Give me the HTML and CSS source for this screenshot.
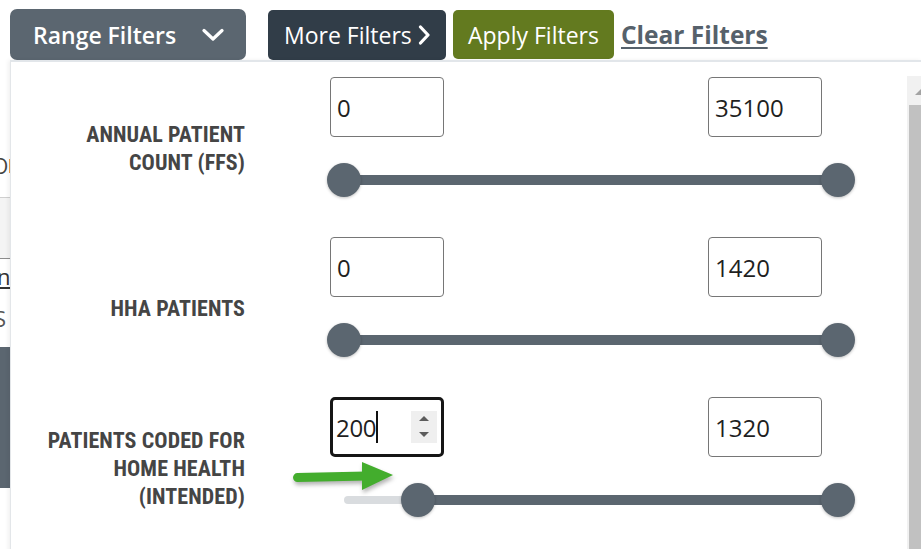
FILE: index.html
```html
<!DOCTYPE html>
<html lang="en">
<head>
<meta charset="utf-8">
<title>Range Filters</title>
<link rel="stylesheet" href="styles.css">
</head>
<body>
<div class="page">
  <div class="toolbar">
    <button class="btn btn-range">
      <span>Range Filters</span>
      <svg class="chev-down" width="22" height="14" viewBox="0 0 22 14"><polyline points="2,2.5 11,11 20,2.5" fill="none" stroke="#fff" stroke-width="3.2" stroke-linecap="round" stroke-linejoin="round"/></svg>
    </button>
    <button class="btn btn-more">
      <span>More Filters</span>
      <svg class="chev-right" width="13" height="20" viewBox="0 0 13 20"><polyline points="2.5,2 10,10 2.5,18" fill="none" stroke="#fff" stroke-width="3.2" stroke-linecap="round" stroke-linejoin="round"/></svg>
    </button>
    <button class="btn btn-apply">Apply Filters</button>
    <a class="clear" href="#">Clear Filters</a>
  </div>

  <div class="backdrop">
    <div class="frag frag-o"><span class="dark">O</span><span class="orange"></span></div>
    <div class="frag frag-band"></div>
    <div class="frag frag-n">n</div>
    <div class="frag frag-s">S</div>
    <div class="frag frag-block"></div>
  </div>

  <div class="dropdown">
    <div class="panel-body">
      <div class="filter-row">
        <div class="label">ANNUAL PATIENT<br>COUNT (FFS)</div>
        <div class="control">
          <div class="inputs">
            <div class="num">0</div>
            <div class="num">35100</div>
          </div>
          <div class="slider">
            <div class="track"></div>
            <span class="thumb thumb-start"></span>
            <span class="thumb thumb-end"></span>
          </div>
        </div>
      </div>

      <div class="filter-row">
        <div class="label">HHA PATIENTS</div>
        <div class="control">
          <div class="inputs">
            <div class="num">0</div>
            <div class="num">1420</div>
          </div>
          <div class="slider">
            <div class="track"></div>
            <span class="thumb thumb-start"></span>
            <span class="thumb thumb-end"></span>
          </div>
        </div>
      </div>

      <div class="filter-row">
        <div class="label">PATIENTS CODED FOR<br>HOME HEALTH<br>(INTENDED)</div>
        <div class="control">
          <div class="inputs">
            <div class="num num-focus">
              <span class="val">200</span><span class="caret"></span>
              <span class="spin">
                <svg width="26" height="32" viewBox="0 0 26 32"><polygon points="8,10 13,5 18,10" fill="#5c5c5c"/><polygon points="8,21 18,21 13,26" fill="#5c5c5c"/></svg>
              </span>
            </div>
            <div class="num">1320</div>
          </div>
          <div class="slider">
            <div class="rail" style="width: 74px"></div>
            <div class="track" style="left: 91px"></div>
            <span class="thumb" style="left: 74px"></span>
            <span class="thumb thumb-end"></span>
          </div>
        </div>
      </div>
    </div>
    <div class="scrollbar">
      <div class="sb-btn"><span class="sb-arrow"></span></div>
      <div class="sb-thumb"></div>
    </div>
  </div>

  <svg class="annot-arrow" width="110" height="40" viewBox="0 0 110 40">
    <line x1="7.5" y1="19.5" x2="76" y2="18" stroke="#43ad2d" stroke-width="9" stroke-linecap="round"/>
    <polygon points="72,4 103,17 72,32" fill="#43ad2d"/>
  </svg>
</div>
</body>
</html>
```

FILE: styles.css
```css
* { box-sizing: border-box; }

html, body {
  margin: 0;
  padding: 0;
  width: 921px;
  height: 549px;
  overflow: hidden;
  background: #ffffff;
  font-family: "Open Sans", "Liberation Sans", sans-serif;
}

.page {
  position: relative;
  width: 921px;
  height: 549px;
}

/* ---------- toolbar ---------- */
.toolbar {
  display: flex;
  align-items: flex-start;
  padding: 9px 0 0 10px;
  height: 61px;
}

.btn {
  display: flex;
  align-items: center;
  border: none;
  color: #ffffff;
  font-family: "Open Sans", sans-serif;
  font-size: 23px;
  line-height: 30px;
  border-radius: 7px;
  cursor: pointer;
}

.btn-range {
  width: 236px;
  height: 51px;
  padding: 0 22px 0 23px;
  justify-content: space-between;
  background: #5b6670;
  font-weight: 600;
}

.btn-more {
  margin-left: 22px;
  margin-top: 1px;
  width: 178px;
  height: 50px;
  padding: 0 15px 0 16px;
  justify-content: space-between;
  background: #313d48;
  border-radius: 5px;
}

.btn-apply {
  margin-left: 7px;
  margin-top: 1px;
  width: 161px;
  height: 49px;
  padding: 0 0 0 15px;
  background: #637a1f;
  border-radius: 5px;
}

.clear {
  margin-left: 7px;
  margin-top: 9px;
  font-size: 24.5px;
  font-weight: 700;
  line-height: 34px;
  color: #56616b;
  text-decoration: underline;
  text-decoration-thickness: 2px;
  text-underline-offset: 3px;
}

/* ---------- background page strip (left) ---------- */
.backdrop {
  width: 10px;
  overflow: hidden;
  display: flex;
  flex-direction: column;
}

.frag-o {
  margin-top: 95px;
  height: 20px;
  display: flex;
  align-items: center;
  font-size: 21px;
  line-height: 20px;
}
.frag-o .dark { color: #444; margin-left: -8px; }
.frag-o .orange { width: 2px; height: 14px; background: #f0a04b; margin-left: 1px; }

.frag-band {
  margin-top: 21px;
  height: 62px;
  background: #f4f4f4;
  border-top: 1px solid #cfcfcf;
  border-bottom: 1px solid #8d8d8d;
}

.frag-n {
  margin-top: 4px;
  margin-left: -3px;
  font-size: 22px;
  line-height: 26px;
  color: #333;
  text-decoration: underline;
}

.frag-s {
  margin-top: 16px;
  margin-left: -6px;
  font-size: 22px;
  line-height: 26px;
  color: #555;
}

.frag-block {
  margin-top: 16px;
  height: 141px;
  background: #5b6670;
}

/* ---------- dropdown panel ---------- */
.dropdown {
  position: absolute;
  left: 10px;
  top: 60px;
  width: 912px;
  height: 500px;
  background: #ffffff;
  border-top: 2px solid #e2e6ea;
  border-left: 1px solid #e3e6e9;
  box-shadow: -2px 0 4px rgba(0, 0, 0, 0.06);
  display: flex;
}

.panel-body {
  flex: 1;
  padding-top: 15px;
  display: flex;
  flex-direction: column;
  gap: 16px;
}

.filter-row {
  display: grid;
  grid-template-columns: 234px 492px;
  column-gap: 85px;
}

.label {
  align-self: center;
  text-align: right;
  font-family: "Roboto Condensed", Roboto, "Liberation Sans", sans-serif;
  font-stretch: 85%;
  font-weight: 700;
  font-size: 22px;
  line-height: 28px;
  color: #454545;
  letter-spacing: 0.1px;
}

.control {
  padding-bottom: 24px;
}

.inputs {
  display: flex;
  justify-content: space-between;
}

.num {
  width: 114px;
  height: 60px;
  border: 1px solid #767676;
  border-radius: 4px;
  padding-left: 6px;
  display: flex;
  align-items: center;
  font-size: 24px;
  color: #1f1f1f;
}

.num-focus {
  position: relative;
  border: 3px solid #161616;
  border-radius: 5px;
  padding-left: 3px;
}
.num-focus .val { letter-spacing: -0.3px; }
.num-focus .caret {
  width: 2px;
  height: 32px;
  background: #111;
  margin-left: 0;
}
.num-focus .spin {
  margin-left: auto;
  margin-right: 4px;
  width: 26px;
  height: 32px;
  background: #efefef;
  display: flex;
}

/* slider */
.slider {
  position: relative;
  margin-top: 26px;
  margin-left: -3px;
  width: 528px;
  height: 34px;
}

.track {
  position: absolute;
  left: 17px;
  right: 17px;
  top: 12px;
  height: 10px;
  background: #5b6670;
}

.rail {
  position: absolute;
  left: 17px;
  top: 13px;
  height: 8px;
  border-radius: 4px;
  background: #d9dcdf;
}

.thumb {
  position: absolute;
  top: 0;
  width: 34px;
  height: 34px;
  border-radius: 50%;
  background: #5b6670;
  box-shadow: 0 1px 3px rgba(0, 0, 0, 0.25);
}
.thumb-start { left: 0; }
.thumb-end { right: 0; }

/* fake scrollbar */
.scrollbar {
  width: 15px;
  margin-top: 14px;
  background: #f1f1f1;
  display: flex;
  flex-direction: column;
}
.sb-btn {
  height: 29px;
  position: relative;
}
.sb-arrow {
  position: absolute;
  left: 8px;
  top: 12px;
  width: 0;
  height: 0;
  border-left: 7px solid transparent;
  border-right: 7px solid transparent;
  border-bottom: 7px solid #a3a3a3;
}
.sb-thumb {
  flex: 1;
  margin-left: 2px;
  background: #c1c1c1;
}

/* annotation arrow */
.annot-arrow {
  position: absolute;
  left: 290px;
  top: 458px;
  filter: drop-shadow(1px 3px 2px rgba(0, 0, 0, 0.3));
}
```
